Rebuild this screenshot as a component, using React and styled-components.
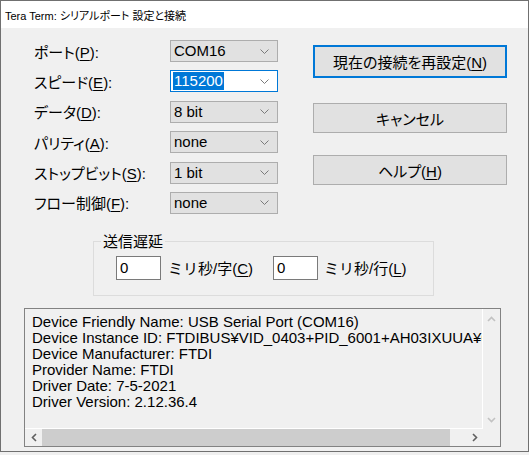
import { Fragment } from 'react'
import styled, { createGlobalStyle } from 'styled-components'

const Global = createGlobalStyle`
    html, body { margin: 0; padding: 0; background: #f0f0f0; }
    body {
        font-family: "Liberation Sans", "Noto Sans CJK JP", sans-serif;
        color: #000;
    }
`

//#     --- Window frame
const Window = styled.div`
    width: 529px;
    height: 452px;
    box-sizing: border-box;
    border: 1px solid #707070;
    background: #f0f0f0;
    display: flex;
    flex-direction: column;
`
const TitleBar = styled.div`
    height: 27px;
    background: #ffffff;
    display: flex;
    align-items: center;
    padding-left: 4px;
    font-size: 11px;
    font-feature-settings: "palt";
`
const Body = styled.div`
    flex: 1;
    padding-top: 12px;
    display: flex;
    flex-direction: column;
`

//#     --- Top area: form + buttons
const Top = styled.div`
    display: flex;
    align-items: flex-start;
`
const Form = styled.div`
    margin-left: 33px;
    display: grid;
    grid-template-columns: 136px 108px;
    grid-auto-rows: 22px;
    row-gap: 8.4px;
    align-items: center;
`
const Label = styled.span`
    font-size: 15px;
    font-feature-settings: "palt";
    white-space: nowrap;
    u { text-decoration-thickness: 1px; text-underline-offset: 2px; }
`
const Combo = styled.div`
    height: 22px;
    box-sizing: border-box;
    border: 1px solid ${ ({ $focus }) => $focus ? '#0078d7' : '#adadad' };
    background: ${ ({ $focus }) => $focus ? '#ffffff' : '#e1e1e1' };
    display: flex;
    align-items: center;
    justify-content: space-between;
    padding: 0 8px 0 2px;
    font-size: 15px;
`
const ComboText = styled.span`
    padding: 0 1px;
    line-height: 18px;
    background: ${ ({ $selected }) => $selected ? '#0078d7' : 'transparent' };
    color: ${ ({ $selected }) => $selected ? '#ffffff' : '#000000' };
`
const Chevron = () => (
    <svg width="9" height="5" viewBox="0 0 9 5">
        <polyline points="0.5,0.5 4.5,4.5 8.5,0.5" fill="none" stroke="#7a7a7a" strokeWidth="1" />
    </svg>
)

const Buttons = styled.div`
    margin-left: 35px;
    margin-top: 5px;
    display: flex;
    flex-direction: column;
    gap: 22px;
`
const Button = styled.button`
    width: 194px;
    height: ${ ({ $primary }) => $primary ? '33px' : '30px' };
    margin-bottom: ${ ({ $primary }) => $primary ? '3px' : '0' };
    box-sizing: border-box;
    border: ${ ({ $primary }) => $primary ? '2px solid #0078d7' : '1px solid #adadad' };
    background: #e1e1e1;
    font-family: inherit;
    font-feature-settings: "palt";
    font-size: 15px;
    color: #000;
    padding: 0;
    u { text-decoration-thickness: 1px; text-underline-offset: 2px; }
`

//#     --- Delay group
const Group = styled.fieldset`
    margin: 19px 0 0 92px;
    width: 341px;
    height: 63px;
    box-sizing: border-box;
    border: 1px solid #dcdcdc;
    padding: 6px 0 0 7px;
    min-width: 0;
`
const Legend = styled.legend`
    font-size: 15px;
    line-height: 17px;
    padding: 0 2px;
`
const DelayRow = styled.div`
    margin-left: 15px;
    display: flex;
    align-items: center;
`
const NumInput = styled.div`
    width: 45px;
    height: 24px;
    box-sizing: border-box;
    border: 1px solid #7a7a7a;
    background: #fff;
    font-size: 15px;
    line-height: 22px;
    padding-left: 3px;
    margin-right: ${ ({ $gap }) => $gap }px;
`
const Unit = styled.span`
    font-size: 15px;
    white-space: nowrap;
    margin-right: ${ ({ $gap }) => $gap || 0 }px;
    u { text-decoration-thickness: 1px; text-underline-offset: 2px; }
`

//#     --- Device info box
const InfoBox = styled.div`
    margin: 12px 0 0 23px;
    width: 477px;
    height: 139px;
    box-sizing: border-box;
    border: 1px solid #828282;
    display: grid;
    grid-template-columns: 1fr 17px;
    grid-template-rows: 1fr 17px;
`
const InfoText = styled.div`
    overflow: hidden;
    white-space: nowrap;
    padding: 5px 0 0 7px;
    font-size: 15px;
    line-height: 16px;
    border-right: 1px solid #ffffff;
    border-bottom: 1px solid #ffffff;
`
const VScroll = styled.div`
    display: flex;
    flex-direction: column;
    justify-content: space-between;
    align-items: center;
    padding: 7px 0 6px;
`
const HScroll = styled.div`
    display: grid;
    grid-template-columns: 17px 1fr 17px;
    align-items: center;
`
const Thumb = styled.div`
    height: 17px;
    margin-right: 16px;
    background: #cdcdcd;
`
const Arrow = ({ dir, color }) => {
    const pts = {
        up: '1,5 4.5,1.5 8,5',
        down: '1,1 4.5,4.5 8,1',
        left: '5,1 1.5,4.5 5,8',
        right: '1,1 4.5,4.5 1,8',
    }[dir]
    const w = dir === 'up' || dir === 'down' ? 9 : 6
    const h = dir === 'up' || dir === 'down' ? 6 : 9
    return (
        <svg width={ w } height={ h } viewBox={ `0 0 ${ w } ${ h }` } style={ { justifySelf: 'center' } }>
            <polyline points={ pts } fill="none" stroke={ color } strokeWidth="1.6" />
        </svg>
    )
}

const fields = [
    { label: <>ポート(<u>P</u>):</>, value: 'COM16' },
    { label: <>スピード(<u>E</u>):</>, value: '115200', focus: true },
    { label: <>データ(<u>D</u>):</>, value: '8 bit' },
    { label: <>パリティ(<u>A</u>):</>, value: 'none' },
    { label: <>ストップビット(<u>S</u>):</>, value: '1 bit' },
    { label: <>フロー制御(<u>F</u>):</>, value: 'none' },
]

const info = [
    'Device Friendly Name: USB Serial Port (COM16)',
    'Device Instance ID: FTDIBUS¥VID_0403+PID_6001+AH03IXUUA¥0000',
    'Device Manufacturer: FTDI',
    'Provider Name: FTDI',
    'Driver Date: 7-5-2021',
    'Driver Version: 2.12.36.4',
]

const App = () => {
    return(
        <Window>
            <Global />
            <TitleBar>Tera Term: シリアルポート 設定と接続</TitleBar>
            <Body>
                <Top>
                    <Form>
                        { fields.map( ( f, i ) => (
                            <Fragment key={ i }>
                                <Label>{ f.label }</Label>
                                <Combo $focus={ f.focus }>
                                    <ComboText $selected={ f.focus }>{ f.value }</ComboText>
                                    <Chevron />
                                </Combo>
                            </Fragment>
                        ) ) }
                    </Form>
                    <Buttons>
                        <Button $primary>現在の接続を再設定(<u>N</u>)</Button>
                        <Button>キャンセル</Button>
                        <Button>ヘルプ(<u>H</u>)</Button>
                    </Buttons>
                </Top>

                <Group>
                    <Legend>送信遅延</Legend>
                    <DelayRow>
                        <NumInput $gap={ 7 }>0</NumInput>
                        <Unit $gap={ 20 }>ミリ秒/字(<u>C</u>)</Unit>
                        <NumInput $gap={ 6 }>0</NumInput>
                        <Unit>ミリ秒/行(<u>L</u>)</Unit>
                    </DelayRow>
                </Group>

                <InfoBox>
                    <InfoText>
                        { info.map( line => <div key={ line }>{ line }</div> ) }
                    </InfoText>
                    <VScroll>
                        <Arrow dir="up" color="#c2c2c2" />
                        <Arrow dir="down" color="#c2c2c2" />
                    </VScroll>
                    <HScroll>
                        <Arrow dir="left" color="#606060" />
                        <Thumb />
                        <Arrow dir="right" color="#606060" />
                    </HScroll>
                    <div />
                </InfoBox>
            </Body>
        </Window>
    )
}
export default App
